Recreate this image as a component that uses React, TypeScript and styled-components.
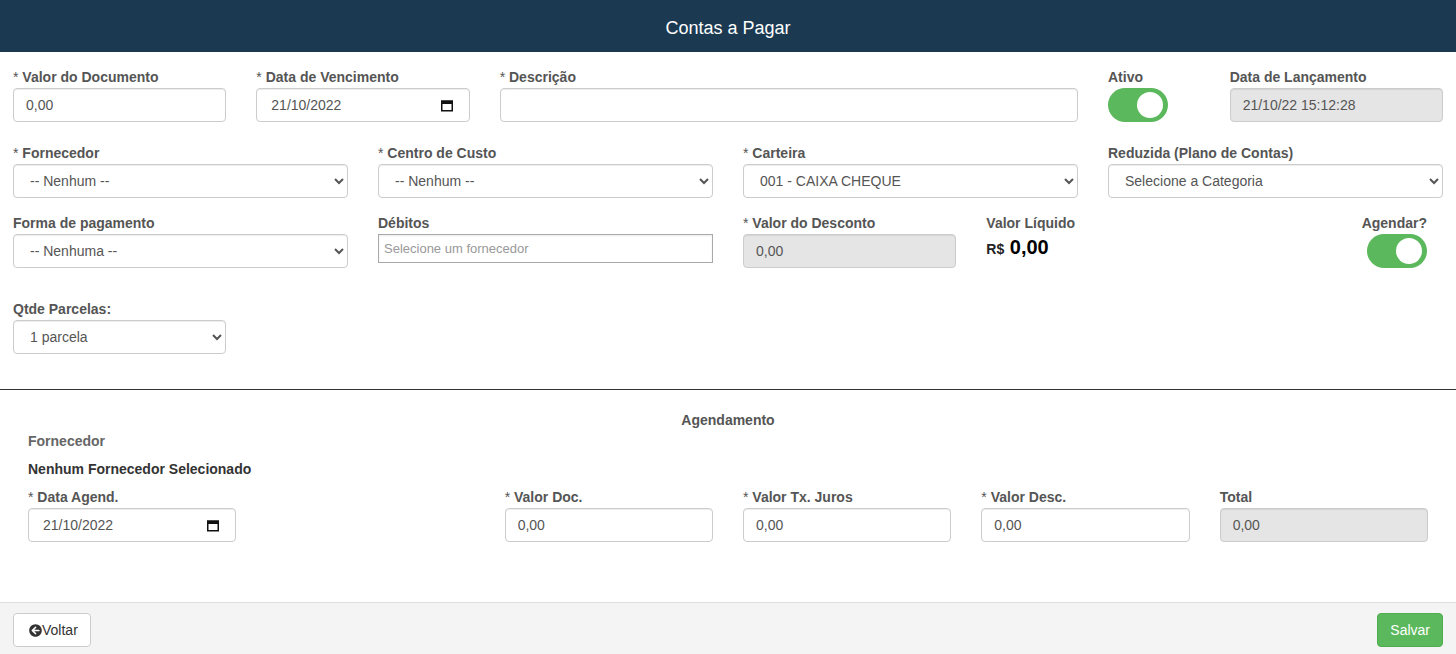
import styled, {createGlobalStyle} from "styled-components";
import {FaArrowCircleLeft} from "react-icons/fa";

const CalendarIcon = () => (
    <svg width="12" height="13" viewBox="0 0 12 13">
        <rect x="0.75" y="2.25" width="10.5" height="9.5" fill="none" stroke="#111" strokeWidth="1.5"/>
        <rect x="0" y="1.5" width="12" height="3.5" fill="#111"/>
    </svg>
)

const DateField = ({value}: { value: string }) => (
    <DateBox>
        <DateText>{value}</DateText>
        <CalendarIcon/>
    </DateBox>
)

const Switch = () => (
    <Toggle>
        <Knob/>
    </Toggle>
)

export default function App() {
    return (
        <Page>
            <GlobalStyle/>
            <Header>Contas a Pagar</Header>

            <Form>
                <Row $mt={0}>
                    <Field $span={2}>
                        <Label><Req>* </Req>Valor do Documento</Label>
                        <TextInput defaultValue="0,00"/>
                    </Field>
                    <Field $span={2}>
                        <Label><Req>* </Req>Data de Vencimento</Label>
                        <DateField value="21/10/2022"/>
                    </Field>
                    <Field $span={5}>
                        <Label><Req>* </Req>Descrição</Label>
                        <TextInput defaultValue=""/>
                    </Field>
                    <Field $span={1}>
                        <Label>Ativo</Label>
                        <Switch/>
                    </Field>
                    <Field $span={2}>
                        <Label>Data de Lançamento</Label>
                        <TextInput $disabled readOnly defaultValue="21/10/22 15:12:28"/>
                    </Field>
                </Row>

                <Row $mt={21}>
                    <Field $span={3}>
                        <Label><Req>* </Req>Fornecedor</Label>
                        <Select defaultValue="0">
                            <option value="0">-- Nenhum --</option>
                        </Select>
                    </Field>
                    <Field $span={3}>
                        <Label><Req>* </Req>Centro de Custo</Label>
                        <Select defaultValue="0">
                            <option value="0">-- Nenhum --</option>
                        </Select>
                    </Field>
                    <Field $span={3}>
                        <Label><Req>* </Req>Carteira</Label>
                        <Select defaultValue="1">
                            <option value="1">001 - CAIXA CHEQUE</option>
                        </Select>
                    </Field>
                    <Field $span={3}>
                        <Label>Reduzida (Plano de Contas)</Label>
                        <Select defaultValue="0">
                            <option value="0">Selecione a Categoria</option>
                        </Select>
                    </Field>
                </Row>

                <Row $mt={15}>
                    <Field $span={3}>
                        <Label>Forma de pagamento</Label>
                        <Select defaultValue="0">
                            <option value="0">-- Nenhuma --</option>
                        </Select>
                    </Field>
                    <Field $span={3}>
                        <Label>Débitos</Label>
                        <SearchInput placeholder="Selecione um fornecedor"/>
                    </Field>
                    <Field $span={2}>
                        <Label><Req>* </Req>Valor do Desconto</Label>
                        <TextInput $disabled readOnly defaultValue="0,00"/>
                    </Field>
                    <Field $span={2}>
                        <Label>Valor Líquido</Label>
                        <Amount><Currency>R$</Currency> 0,00</Amount>
                    </Field>
                    <Field $span={2} $right>
                        <Label>Agendar?</Label>
                        <Switch/>
                    </Field>
                </Row>

                <Row $mt={31}>
                    <Field $span={2}>
                        <Label>Qtde Parcelas:</Label>
                        <Select defaultValue="1">
                            <option value="1">1 parcela</option>
                        </Select>
                    </Field>
                </Row>
            </Form>

            <Divider/>

            <Agenda>
                <AgendaTitle>Agendamento</AgendaTitle>
                <AgendaGrid>
                    <Field $span={1}>
                        <SupplierCaption>Fornecedor</SupplierCaption>
                        <SupplierName>Nenhum Fornecedor Selecionado</SupplierName>
                        <Label><Req>* </Req>Data Agend.</Label>
                        <DateField value="21/10/2022"/>
                    </Field>
                    <Field $span={1}/>
                    <Field $span={1}>
                        <Label><Req>* </Req>Valor Doc.</Label>
                        <TextInput defaultValue="0,00"/>
                    </Field>
                    <Field $span={1}>
                        <Label><Req>* </Req>Valor Tx. Juros</Label>
                        <TextInput defaultValue="0,00"/>
                    </Field>
                    <Field $span={1}>
                        <Label><Req>* </Req>Valor Desc.</Label>
                        <TextInput defaultValue="0,00"/>
                    </Field>
                    <Field $span={1}>
                        <Label>Total</Label>
                        <TextInput $disabled readOnly defaultValue="0,00"/>
                    </Field>
                </AgendaGrid>
            </Agenda>

            <Footer>
                <Button><BackIcon/>Voltar</Button>
                <Button $primary>Salvar</Button>
            </Footer>
        </Page>
    )
}

const GlobalStyle = createGlobalStyle`
    html, body {
        margin: 0;
        padding: 0;
        height: 100%;
        overflow: hidden;
    }

    body {
        font-family: "Liberation Sans", Arial, sans-serif;
        font-size: 14px;
        color: #333;
        background: #fff;
    }

    #root {
        height: 100%;
    }
`

const Page = styled.div`
    display: flex;
    flex-direction: column;
    height: 100%;
`

const Header = styled.header`
    height: 52px;
    box-sizing: border-box;
    padding-top: 5px;
    background: #1b3a52;
    color: #fff;
    font-size: 18px;
    display: flex;
    align-items: center;
    justify-content: center;
`

const Form = styled.div`
    padding: 15px 13px 0;
`

const Row = styled.div<{ $mt: number }>`
    display: grid;
    grid-template-columns: repeat(12, 1fr);
    column-gap: 30px;
    margin-top: ${props => props.$mt}px;
`

const Field = styled.div<{ $span: number, $right?: boolean }>`
    grid-column: span ${props => props.$span};
    display: flex;
    flex-direction: column;
    align-items: ${props => props.$right ? "flex-end" : "stretch"};
    padding-right: ${props => props.$right ? "16px" : "0"};
    min-width: 0;
`

const Label = styled.label`
    font-weight: bold;
    line-height: 20px;
    margin-bottom: 1px;
    color: #555;
    white-space: nowrap;
`

const Req = styled.span`
    font-weight: normal;
`

const TextInput = styled.input<{ $disabled?: boolean }>`
    height: 34px;
    width: 100%;
    box-sizing: border-box;
    padding: 6px 12px;
    border: 1px solid #ccc;
    border-radius: 4px;
    box-shadow: inset 0 1px 1px rgba(0, 0, 0, .075);
    font-family: "Liberation Sans", Arial, sans-serif;
    font-size: 14px;
    color: #555;
    background: ${props => props.$disabled ? "#e5e5e5" : "#fff"};
    outline: none;
`

const Select = styled.select`
    height: 34px;
    width: 100%;
    box-sizing: border-box;
    padding: 6px 12px;
    border: 1px solid #ccc;
    border-radius: 4px;
    box-shadow: inset 0 1px 1px rgba(0, 0, 0, .075);
    font-family: "Liberation Sans", Arial, sans-serif;
    font-size: 14px;
    color: #555;
    background: #fff;
`

const SearchInput = styled.input`
    height: 29px;
    width: 100%;
    box-sizing: border-box;
    padding: 0 5px;
    border: 1px solid #a9a9a9;
    border-radius: 0;
    box-shadow: inset 0 1px 2px rgba(0, 0, 0, .08);
    font-family: "Liberation Sans", Arial, sans-serif;
    font-size: 13px;
    color: #555;
    outline: none;

    &::placeholder {
        color: #999;
    }
`

const DateBox = styled.div`
    height: 34px;
    box-sizing: border-box;
    padding: 0 16px 0 14px;
    border: 1px solid #ccc;
    border-radius: 4px;
    box-shadow: inset 0 1px 1px rgba(0, 0, 0, .075);
    display: flex;
    align-items: center;
    background: #fff;
`

const DateText = styled.span`
    flex: 1;
    color: #555;
    font-size: 14px;
`

const Toggle = styled.div`
    width: 60px;
    height: 34px;
    box-sizing: border-box;
    padding: 0 5px;
    border-radius: 17px;
    background: #5cb85c;
    display: flex;
    align-items: center;
    justify-content: flex-end;
`

const Knob = styled.div`
    width: 26px;
    height: 26px;
    border-radius: 50%;
    background: #fff;
`

const Amount = styled.div`
    font-size: 20px;
    font-weight: bold;
    line-height: 24px;
    padding-top: 1px;
    color: #000;
`

const Currency = styled.span`
    font-size: 14px;
    color: #222;
`

const Divider = styled.hr`
    margin: 35px 0 0;
    border: 0;
    border-top: 1px solid #333;
    height: 0;
`

const Agenda = styled.div`
    padding: 0 28px;
`

const AgendaTitle = styled.div`
    margin-top: 20px;
    text-align: center;
    font-weight: bold;
    line-height: 20px;
    color: #555;
`

const AgendaGrid = styled.div`
    display: grid;
    grid-template-columns: repeat(6, 1fr);
    column-gap: 30px;
    align-items: end;
    margin-top: 1px;
`

const SupplierCaption = styled.div`
    font-weight: bold;
    line-height: 20px;
    color: #666;
`

const SupplierName = styled.div`
    margin: 8px 0;
    font-weight: bold;
    line-height: 20px;
    color: #333;
    white-space: nowrap;
`

const Footer = styled.footer`
    margin-top: auto;
    padding: 10px 13px 7px;
    background: #f4f4f4;
    border-top: 1px solid #ddd;
    display: flex;
    justify-content: space-between;
`

const Button = styled.button<{ $primary?: boolean }>`
    height: 34px;
    box-sizing: border-box;
    padding: 6px 12px;
    border: 1px solid ${props => props.$primary ? "#4cae4c" : "#ccc"};
    border-radius: 4px;
    background: ${props => props.$primary ? "#5cb85c" : "#fff"};
    color: ${props => props.$primary ? "#fff" : "#333"};
    font-family: "Liberation Sans", Arial, sans-serif;
    font-size: 14px;
    line-height: 20px;
    display: inline-flex;
    align-items: center;
`

const BackIcon = styled(FaArrowCircleLeft)`
    width: 13px;
    height: 13px;
    margin-left: 3px;
    color: #333;
`
